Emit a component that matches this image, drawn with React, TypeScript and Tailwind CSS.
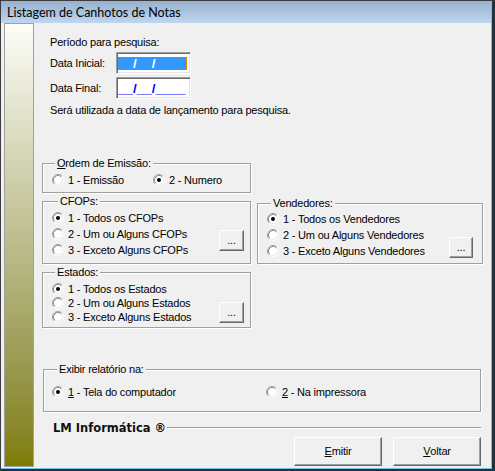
import React from 'react'

type Kids = { children?: React.ReactNode; className?: string }

const Radio = ({ checked = false }: { checked?: boolean }) => (
  <svg width="12" height="12" viewBox="0 0 12 12" className="shrink-0">
    <circle cx="6" cy="6" r="5" fill="#ffffff" />
    <path d="M2.11 9.89A5.5 5.5 0 0 1 9.89 2.11" fill="none" stroke="#a0a0a0" />
    <path d="M9.89 2.11A5.5 5.5 0 0 1 2.11 9.89" fill="none" stroke="#ffffff" />
    <path d="M2.82 9.18A4.5 4.5 0 0 1 9.18 2.82" fill="none" stroke="#8c8c8c" />
    <path d="M9.18 2.82A4.5 4.5 0 0 1 2.82 9.18" fill="none" stroke="#e8e8e8" />
    {checked && <circle cx="6" cy="6" r="2" fill="#000000" />}
  </svg>
)

const Option = ({ children, checked, className = '' }: Kids & { checked?: boolean }) => (
  <div className={`flex items-center gap-[4px] ${className}`}>
    <Radio checked={checked} />
    <span className="whitespace-nowrap">{children}</span>
  </div>
)

const Group = ({ legend, legendClass = '', className = '', children }: Kids & { legend: React.ReactNode; legendClass?: string }) => (
  <fieldset className={`border border-[#a0a0a0] shadow-[1px_1px_0_#ffffff,inset_1px_1px_0_#ffffff] ${className}`}>
    <legend className={`bg-[#f0f0f0] px-[2px] leading-[13px] ${legendClass}`}>{legend}</legend>
    {children}
  </fieldset>
)

const DotsButton = ({ className = '' }: { className?: string }) => (
  <button className={`h-[21px] shrink-0 bg-[#f0f0f0] border border-t-white border-l-white border-r-[#696969] border-b-[#696969] shadow-[inset_-1px_-1px_0_#a0a0a0] flex items-center justify-center leading-none ${className}`}>
    ...
  </button>
)

const PushButton = ({ children }: Kids) => (
  <button className="w-[88px] h-[29px] bg-[#f0f0f0] border border-t-white border-l-white border-r-[#696969] border-b-[#696969] shadow-[inset_-1px_-1px_0_#a0a0a0] flex items-center justify-center">
    {children}
  </button>
)

const DateInput = ({ selected = false }: { selected?: boolean }) => (
  <div className="w-[75px] h-[22px] bg-white border border-[#a0a0a0] border-r-white border-b-white shadow-[inset_1px_1px_0_#696969,inset_-1px_-1px_0_#e3e3e3] flex items-center pl-[1px] whitespace-nowrap">
    {selected ? (
      <>
        <span className="bg-[#3399ff] h-[13px] leading-[13px] text-[13.5px] font-bold tracking-normal text-[#3399ff]">
          __<span className="text-white">/</span>__<span className="text-white">/</span>____
        </span>
        <span className="w-[1px] h-[13px] bg-[#e07a10]" />
      </>
    ) : (
      <span className="h-[13px] leading-[13px] text-[13.5px] font-bold tracking-normal text-[#0000ff]">__/__/____</span>
    )}
  </div>
)

export default function App() {
  return (
    <div className="w-[495px] h-[471px] bg-[#f0f0f0] border-t border-l border-[#3c3c3c] border-r-[3px] border-r-[#24303c] border-b-2 border-b-[#24303c] font-['Liberation_Sans',Arial,sans-serif] text-[11px] leading-[13px] tracking-[-0.2px] text-black overflow-hidden">
      <div className="h-full flex flex-col border-r border-b border-[#6cc4ea]">
        <div className="h-[22px] shrink-0 bg-gradient-to-b from-[#98b1ce] to-[#bed6ee] flex items-center pl-[6px] font-['Lato','Noto_Sans',sans-serif] text-[12.5px] tracking-normal text-black">
          Listagem de Canhotos de Notas
        </div>
        <div className="flex flex-1 min-h-0">
          <div className="ml-[3px] mb-[1px] w-[30px] border border-[#a0a0a0] bg-gradient-to-b from-[#fdfdf8] to-[#7f7d00]" />
          <div className="flex flex-col pl-[8px]">
            <div className="ml-[8px] mt-[13px]">Período para pesquisa:</div>
            <div className="ml-[8px] mt-[3px] flex items-center">
              <span className="w-[66px]">Data Inicial:</span>
              <DateInput selected />
            </div>
            <div className="ml-[8px] mt-[3px] flex items-center">
              <span className="w-[66px]">Data Final:</span>
              <DateInput />
            </div>
            <div className="ml-[8px] mt-[5px]">Será utilizada a data de lançamento para pesquisa.</div>

            <Group
              className="mt-[40px] w-[209px]"
              legendClass="ml-[12px]"
              legend={<><span className="underline">O</span>rdem de Emissão:</>}
            >
              <div className="pt-[3px] pb-[5px] flex items-center">
                <Option className="ml-[9px] w-[101px] h-[14px]">1 - Emissão</Option>
                <Option checked className="h-[14px]">2 - Numero</Option>
              </div>
            </Group>

            <div className="mt-[2px] flex items-start">
              <Group className="w-[209px]" legendClass="ml-[15px]" legend="CFOPs:">
                <div className="flex pt-[2px] pb-[5px]">
                  <div className="flex-1 flex flex-col pl-[9px]">
                    <Option checked className="h-[16px]">1 - Todos os CFOPs</Option>
                    <Option className="h-[16px]">2 - Um ou Alguns CFOPs</Option>
                    <Option className="h-[16px]">3 - Exceto Alguns CFOPs</Option>
                  </div>
                  <DotsButton className="w-[25px] mt-[20px] mr-[6px]" />
                </div>
              </Group>
              <Group className="mt-[2px] ml-[6px] w-[226px]" legendClass="ml-[13px]" legend="Vendedores:">
                <div className="flex pt-[1px] pb-[4px]">
                  <div className="flex-1 flex flex-col pl-[9px]">
                    <Option checked className="h-[16px]">1 - Todos os Vendedores</Option>
                    <Option className="h-[16px]">2 - Um ou Alguns Vendedores</Option>
                    <Option className="h-[16px]">3 - Exceto Alguns Vendedores</Option>
                  </div>
                  <DotsButton className="w-[24px] mt-[26px] mr-[9px]" />
                </div>
              </Group>
            </div>

            <Group className="mt-[2px] w-[209px]" legendClass="ml-[12px]" legend="Estados:">
              <div className="flex pt-[3px] pb-[3px]">
                <div className="flex-1 flex flex-col pl-[9px]">
                  <Option checked className="h-[14px]">1 - Todos os Estados</Option>
                  <Option className="h-[14px]">2 - Um ou Alguns Estados</Option>
                  <Option className="h-[14px]">3 - Exceto Alguns Estados</Option>
                </div>
                <DotsButton className="w-[25px] mt-[20px] mr-[6px]" />
              </div>
            </Group>

            <Group className="mt-[35px] ml-[1px] w-[438px]" legendClass="ml-[13px]" legend="Exibir relatório na:">
              <div className="pt-[9px] pb-[12px] flex items-center">
                <Option checked className="ml-[8px] w-[214px] h-[14px]">
                  <span className="underline">1</span> - Tela do computador
                </Option>
                <Option className="h-[14px]">
                  <span className="underline">2</span> - Na impressora
                </Option>
              </div>
            </Group>

            <div className="mt-[9px] ml-[11px] w-[428px] h-[14px] flex items-center">
              <span className="font-['DejaVu_Sans',sans-serif] font-bold text-[11.5px] tracking-normal text-[#101010] whitespace-nowrap">
                LM Informática ®
              </span>
              <div className="ml-[1px] flex-1 h-[2px] border-t border-t-[#a0a0a0] border-b border-b-white" />
            </div>

            <div className="mt-[2px] w-[439px] flex justify-end gap-[11px]">
              <PushButton><span className="underline">E</span>mitir</PushButton>
              <PushButton><span className="underline">V</span>oltar</PushButton>
            </div>
          </div>
        </div>
      </div>
    </div>
  )
}
